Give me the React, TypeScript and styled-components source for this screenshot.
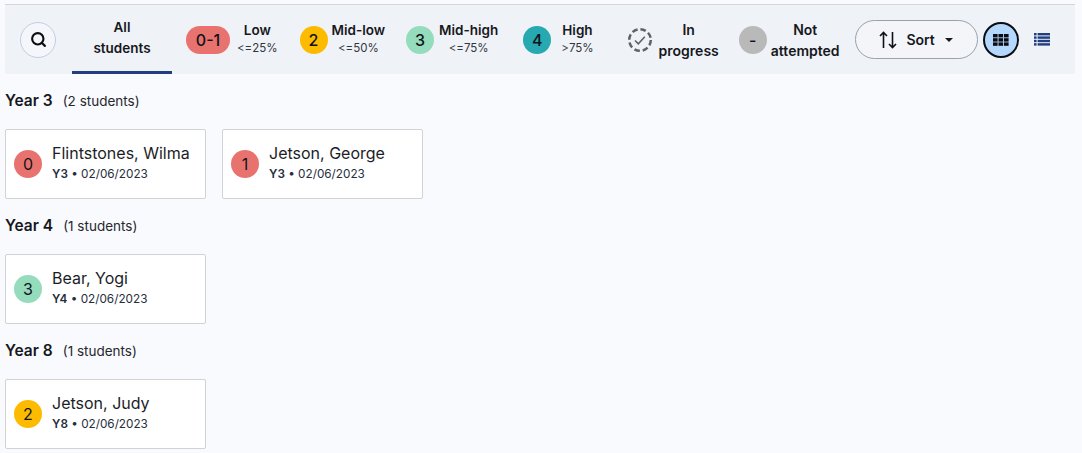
import React from "react";
import styled, { createGlobalStyle } from "styled-components";
import { Search } from "lucide-react";

const GlobalStyle = createGlobalStyle`
  html, body {
    margin: 0;
    padding: 0;
    background: #f9fafd;
    font-family: "Inter", "Liberation Sans", sans-serif;
    color: #16181d;
  }
`;

const Page = styled.div`
  width: 1082px;
  height: 453px;
  overflow: hidden;
  padding: 4px 7px 0 5px;
  box-sizing: border-box;
`;

const Toolbar = styled.div`
  display: flex;
  align-items: center;
  height: 70px;
  box-sizing: border-box;
  background: #eff2f7;
  border-top: 1px solid #d3d5d9;
  padding-left: 15px;
`;

const SearchButton = styled.button`
  width: 36px;
  height: 36px;
  padding: 0;
  flex: none;
  display: flex;
  align-items: center;
  justify-content: center;
  border-radius: 50%;
  border: 1px solid #c3cde0;
  background: #f4f6fb;
  color: #0b0d12;
`;

const Tab = styled.div`
  width: 100px;
  height: 69px;
  margin-left: 16px;
  flex: none;
  box-sizing: border-box;
  padding-top: 12px;
  border-bottom: 3px solid #213e7f;
  text-align: center;
  font-size: 13.5px;
  font-weight: 600;
  line-height: 21px;
`;

const Legend = styled.div<{ $gap: number; $left: number }>`
  display: flex;
  align-items: center;
  gap: ${(p) => p.$gap}px;
  margin-left: ${(p) => p.$left}px;
  flex: none;
`;

const Badge = styled.div<{ $bg: string; $wide?: boolean }>`
  width: ${(p) => (p.$wide ? 44 : 28)}px;
  height: 28px;
  flex: none;
  display: flex;
  align-items: center;
  justify-content: center;
  border-radius: 14px;
  background: ${(p) => p.$bg};
  font-size: 16px;
  font-weight: 500;
  color: #10131a;
`;

const LegendText = styled.div`
  display: flex;
  flex-direction: column;
  align-items: center;
  gap: 3px;
  margin-top: -2px;
`;

const LegendName = styled.span`
  font-size: 13.5px;
  font-weight: 600;
  line-height: 16px;
  white-space: nowrap;
`;

const LegendRange = styled.span`
  font-size: 11.5px;
  line-height: 14px;
  color: #33363d;
`;

const TwoLine = styled.div`
  font-size: 14px;
  font-weight: 600;
  line-height: 21px;
  text-align: center;
`;

const SortButton = styled.button`
  width: 123px;
  height: 39px;
  margin-left: 15px;
  flex: none;
  display: flex;
  align-items: center;
  justify-content: center;
  gap: 9px;
  border-radius: 20px;
  border: 1px solid #9aa1ad;
  background: #f3f5f9;
  font-family: inherit;
  font-size: 14px;
  font-weight: 600;
  color: #16181d;
`;

const Caret = styled.span`
  width: 0;
  height: 0;
  margin-left: 1px;
  border-left: 4px solid transparent;
  border-right: 4px solid transparent;
  border-top: 4px solid #16181d;
`;

const GridToggle = styled.button`
  width: 36px;
  height: 36px;
  margin-left: 5px;
  padding: 0;
  flex: none;
  display: flex;
  align-items: center;
  justify-content: center;
  border-radius: 50%;
  border: 2.5px solid #0b0d12;
  background: #b3d7fd;
`;

const ListToggle = styled.div`
  margin-left: 15px;
  display: flex;
  flex: none;
`;

const Section = styled.section`
  display: flex;
  flex-direction: column;
  align-items: flex-start;
`;

const SectionTitle = styled.div`
  display: flex;
  align-items: baseline;
  gap: 10px;
  height: 20px;
  margin: 17px 0 18px;
  font-size: 15.5px;
  font-weight: 600;
`;

const Count = styled.span`
  font-size: 13.5px;
  font-weight: 400;
  color: #26282e;
`;

const CardRow = styled.div`
  display: flex;
  gap: 16px;
`;

const Card = styled.div`
  width: 201px;
  height: 70px;
  box-sizing: border-box;
  display: flex;
  align-items: center;
  gap: 10px;
  padding: 0 0 3px 8px;
  background: #fff;
  border: 1px solid #d0d2d6;
  border-radius: 2px;
`;

const CardText = styled.div`
  display: flex;
  flex-direction: column;
  gap: 4px;
`;

const Name = styled.span`
  font-size: 16px;
  line-height: 20px;
  white-space: nowrap;
  color: #1b1e26;
`;

const Meta = styled.span`
  font-size: 11.75px;
  line-height: 15px;
  color: #262e3c;
  white-space: nowrap;
  b {
    font-weight: 600;
  }
`;

const ScoreBadge = styled(Badge)`
  margin-top: 3px;
  font-weight: 400;
`;

const RED = "#e8736e";
const AMBER = "#fdbb00";
const MINT = "#94dcbc";
const TEAL = "#26a9b0";

const years = [
  {
    title: "Year 3",
    count: "(2 students)",
    students: [
      { name: "Flintstones, Wilma", year: "Y3", score: "0", color: RED },
      { name: "Jetson, George", year: "Y3", score: "1", color: RED },
    ],
  },
  {
    title: "Year 4",
    count: "(1 students)",
    students: [{ name: "Bear, Yogi", year: "Y4", score: "3", color: MINT }],
  },
  {
    title: "Year 8",
    count: "(1 students)",
    students: [{ name: "Jetson, Judy", year: "Y8", score: "2", color: AMBER }],
  },
];

const ProgressIcon = () => (
  <svg width="26" height="26" viewBox="0 0 26 26" fill="none">
    <circle cx="13" cy="13" r="10.8" stroke="#5f6266" strokeWidth="2.5" strokeDasharray="5.6 2.9" />
    <path d="M8 13.5l3.3 3.3 6.5-7" stroke="#5f6266" strokeWidth="1.6" />
  </svg>
);

const SortIcon = () => (
  <svg width="18" height="18" viewBox="0 0 18 18" fill="none" stroke="#0d1116" strokeWidth="1.6">
    <path d="M4.5 17V1.5M1 5l3.5-3.5L8 5" />
    <path d="M13.5 1v15.5M10 13l3.5 3.5L17 13" />
  </svg>
);

const GridIcon = () => (
  <svg width="16" height="12" viewBox="0 0 16 12" fill="#0b0d12">
    {[0, 4.2, 8.4].map((y) =>
      [0, 5.5, 11].map((x) => <rect key={`${x}-${y}`} x={x} y={y} width="4.6" height="3.4" />)
    )}
  </svg>
);

const ListIcon = () => (
  <svg width="16" height="13" viewBox="0 0 16 13" fill="#213e7f">
    {[0, 3.4, 6.8, 10.2].map((y) => (
      <React.Fragment key={y}>
        <rect x="0" y={y} width="2.6" height="2.4" />
        <rect x="3.6" y={y} width="12.4" height="2.4" />
      </React.Fragment>
    ))}
  </svg>
);

export default function App() {
  return (
    <>
      <GlobalStyle />
      <Page>
        <Toolbar>
          <SearchButton>
            <Search size={17} strokeWidth={3} />
          </SearchButton>
          <Tab>
            All
            <br />
            students
          </Tab>
          <Legend $gap={7} $left={14}>
            <Badge $bg={RED} $wide>0-1</Badge>
            <LegendText>
              <LegendName>Low</LegendName>
              <LegendRange>&lt;=25%</LegendRange>
            </LegendText>
          </Legend>
          <Legend $gap={4} $left={22}>
            <Badge $bg={AMBER}>2</Badge>
            <LegendText>
              <LegendName>Mid-low</LegendName>
              <LegendRange>&lt;=50%</LegendRange>
            </LegendText>
          </Legend>
          <Legend $gap={5} $left={21}>
            <Badge $bg={MINT}>3</Badge>
            <LegendText>
              <LegendName>Mid-high</LegendName>
              <LegendRange>&lt;=75%</LegendRange>
            </LegendText>
          </Legend>
          <Legend $gap={10} $left={25}>
            <Badge $bg={TEAL}>4</Badge>
            <LegendText>
              <LegendName>High</LegendName>
              <LegendRange>&gt;75%</LegendRange>
            </LegendText>
          </Legend>
          <Legend $gap={6} $left={33}>
            <ProgressIcon />
            <TwoLine>
              In
              <br />
              progress
            </TwoLine>
          </Legend>
          <Legend $gap={4} $left={20}>
            <Badge $bg="#b9b9b9">-</Badge>
            <TwoLine>
              Not
              <br />
              attempted
            </TwoLine>
          </Legend>
          <SortButton>
            <SortIcon />
            Sort
            <Caret />
          </SortButton>
          <GridToggle>
            <GridIcon />
          </GridToggle>
          <ListToggle>
            <ListIcon />
          </ListToggle>
        </Toolbar>
        {years.map((y) => (
          <Section key={y.title}>
            <SectionTitle>
              {y.title}
              <Count>{y.count}</Count>
            </SectionTitle>
            <CardRow>
              {y.students.map((s) => (
                <Card key={s.name}>
                  <ScoreBadge $bg={s.color}>{s.score}</ScoreBadge>
                  <CardText>
                    <Name>{s.name}</Name>
                    <Meta>
                      <b>{s.year}</b> • 02/06/2023
                    </Meta>
                  </CardText>
                </Card>
              ))}
            </CardRow>
          </Section>
        ))}
      </Page>
    </>
  );
}
